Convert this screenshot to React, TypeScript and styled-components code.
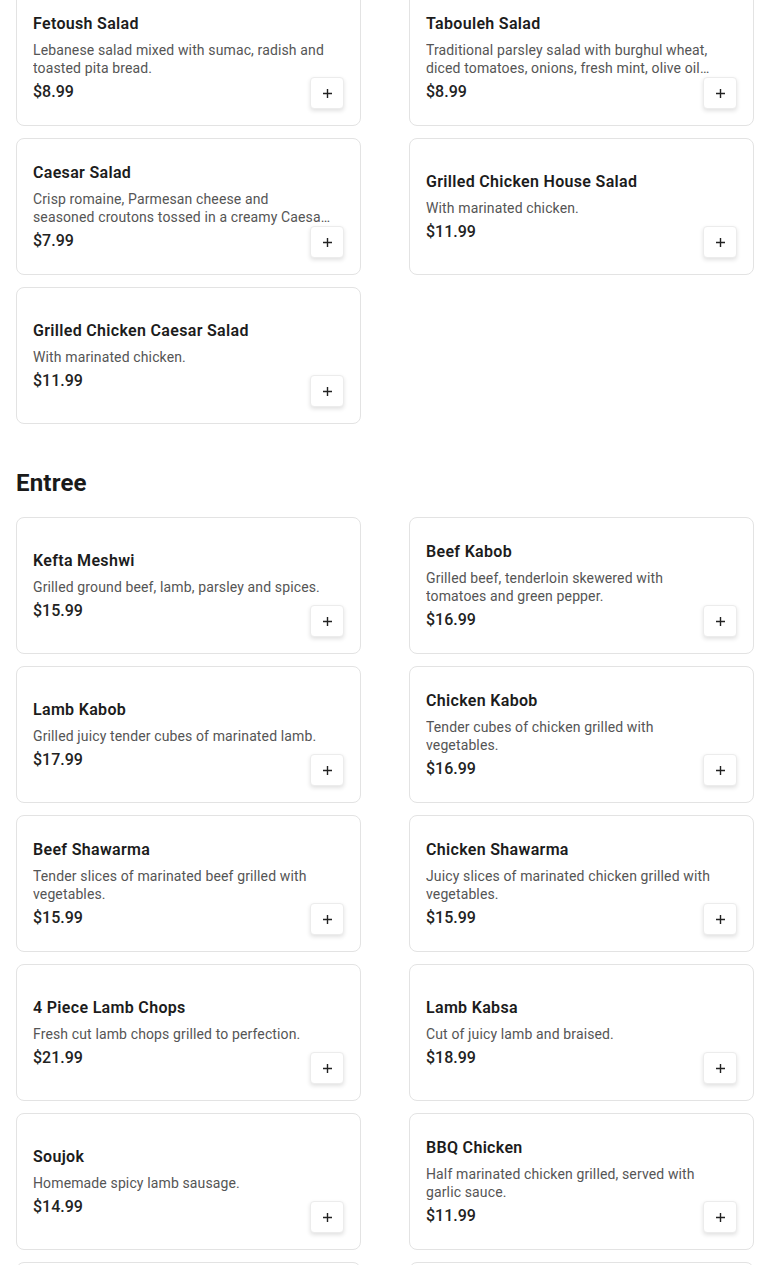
import * as React from "react";
import styled, { createGlobalStyle } from "styled-components";

const GlobalStyle = createGlobalStyle`
  html, body {
    margin: 0;
    padding: 0;
    background: #ffffff;
  }
  body {
    font-family: Roboto, "Liberation Sans", Arial, sans-serif;
    color: #1c1c1c;
  }
`;

type Item = {
  name: string;
  description: string;
  price: string;
};

const salads: Item[] = [
  {
    name: "Fetoush Salad",
    description: "Lebanese salad mixed with sumac, radish and toasted pita bread.",
    price: "$8.99",
  },
  {
    name: "Tabouleh Salad",
    description:
      "Traditional parsley salad with burghul wheat, diced tomatoes, onions, fresh mint, olive oil and lemon juice.",
    price: "$8.99",
  },
  {
    name: "Caesar Salad",
    description:
      "Crisp romaine, Parmesan cheese and seasoned croutons tossed in a creamy Caesar dressing.",
    price: "$7.99",
  },
  {
    name: "Grilled Chicken House Salad",
    description: "With marinated chicken.",
    price: "$11.99",
  },
  {
    name: "Grilled Chicken Caesar Salad",
    description: "With marinated chicken.",
    price: "$11.99",
  },
];

const entrees: Item[] = [
  { name: "Kefta Meshwi", description: "Grilled ground beef, lamb, parsley and spices.", price: "$15.99" },
  { name: "Beef Kabob", description: "Grilled beef, tenderloin skewered with tomatoes and green pepper.", price: "$16.99" },
  { name: "Lamb Kabob", description: "Grilled juicy tender cubes of marinated lamb.", price: "$17.99" },
  { name: "Chicken Kabob", description: "Tender cubes of chicken grilled with vegetables.", price: "$16.99" },
  { name: "Beef Shawarma", description: "Tender slices of marinated beef grilled with vegetables.", price: "$15.99" },
  { name: "Chicken Shawarma", description: "Juicy slices of marinated chicken grilled with vegetables.", price: "$15.99" },
  { name: "4 Piece Lamb Chops", description: "Fresh cut lamb chops grilled to perfection.", price: "$21.99" },
  { name: "Lamb Kabsa", description: "Cut of juicy lamb and braised.", price: "$18.99" },
  { name: "Soujok", description: "Homemade spicy lamb sausage.", price: "$14.99" },
  { name: "BBQ Chicken", description: "Half marinated chicken grilled, served with garlic sauce.", price: "$11.99" },
  { name: "Mixed Grill", description: "Kefta, chicken and beef kabob.", price: "$22.99" },
  { name: "Chicken Tawook", description: "Marinated chicken breast grilled.", price: "$15.99" },
];

// page is shown scrolled a little past the top of the salad list
const Page = styled.main`
  margin-top: -11px;
  padding: 0 16px 24px;
`;

const Section = styled.section`
  & + & {
    margin-top: 43px;
  }
`;

const SectionTitle = styled.h2`
  margin: 0 0 18px;
  font-size: 24px;
  line-height: 32px;
  font-weight: 700;
  letter-spacing: 0.2px;
  color: #1a1a1a;
`;

const Grid = styled.div`
  display: grid;
  grid-template-columns: repeat(2, 345px);
  column-gap: 48px;
  row-gap: 12px;
`;

const Card = styled.article`
  box-sizing: border-box;
  height: 137px;
  padding: 16px;
  border: 1px solid #e3e3e3;
  border-radius: 8px;
  background: #fff;
  display: grid;
  grid-template-columns: 1fr;
  grid-template-rows: 1fr;
`;

const Info = styled.div`
  grid-area: 1 / 1;
  align-self: center;
  padding-right: 12px;
  min-width: 0;
`;

const Name = styled.h3`
  margin: 0 0 5px;
  font-size: 16px;
  line-height: 24px;
  font-weight: 600;
  letter-spacing: 0.32px;
  color: #1c1c1c;
`;

const Description = styled.p`
  margin: 0 0 3px;
  font-size: 14px;
  line-height: 18px;
  letter-spacing: 0.13px;
  color: #555555;
  display: -webkit-box;
  -webkit-line-clamp: 2;
  -webkit-box-orient: vertical;
  overflow: hidden;
`;

const Price = styled.div`
  font-size: 16px;
  line-height: 24px;
  font-weight: 500;
  color: #222;
`;

const AddButton = styled.button`
  grid-area: 1 / 1;
  justify-self: end;
  align-self: end;
  width: 34px;
  height: 32px;
  padding: 0;
  border: 1px solid #ececec;
  border-radius: 4px;
  background: #fff;
  box-shadow: 0 2px 4px rgba(0, 0, 0, 0.12);
  display: flex;
  align-items: center;
  justify-content: center;
  color: #222;
  cursor: pointer;
`;

const PlusIcon = () => (
  <svg width="11" height="11" viewBox="0 0 11 11" aria-hidden="true">
    <path d="M5.5 1v9M1 5.5h9" stroke="currentColor" strokeWidth="1.4" fill="none" />
  </svg>
);

const MenuCard = ({ item }: { item: Item }) => (
  <Card>
    <Info>
      <Name>{item.name}</Name>
      <Description>{item.description}</Description>
      <Price>{item.price}</Price>
    </Info>
    <AddButton aria-label={`Add ${item.name}`}>
      <PlusIcon />
    </AddButton>
  </Card>
);

export default function App() {
  return (
    <>
      <GlobalStyle />
      <Page>
        <Section>
          <Grid>
            {salads.map((item) => (
              <MenuCard key={item.name} item={item} />
            ))}
          </Grid>
        </Section>
        <Section>
          <SectionTitle>Entree</SectionTitle>
          <Grid>
            {entrees.map((item) => (
              <MenuCard key={item.name} item={item} />
            ))}
          </Grid>
        </Section>
      </Page>
    </>
  );
}
